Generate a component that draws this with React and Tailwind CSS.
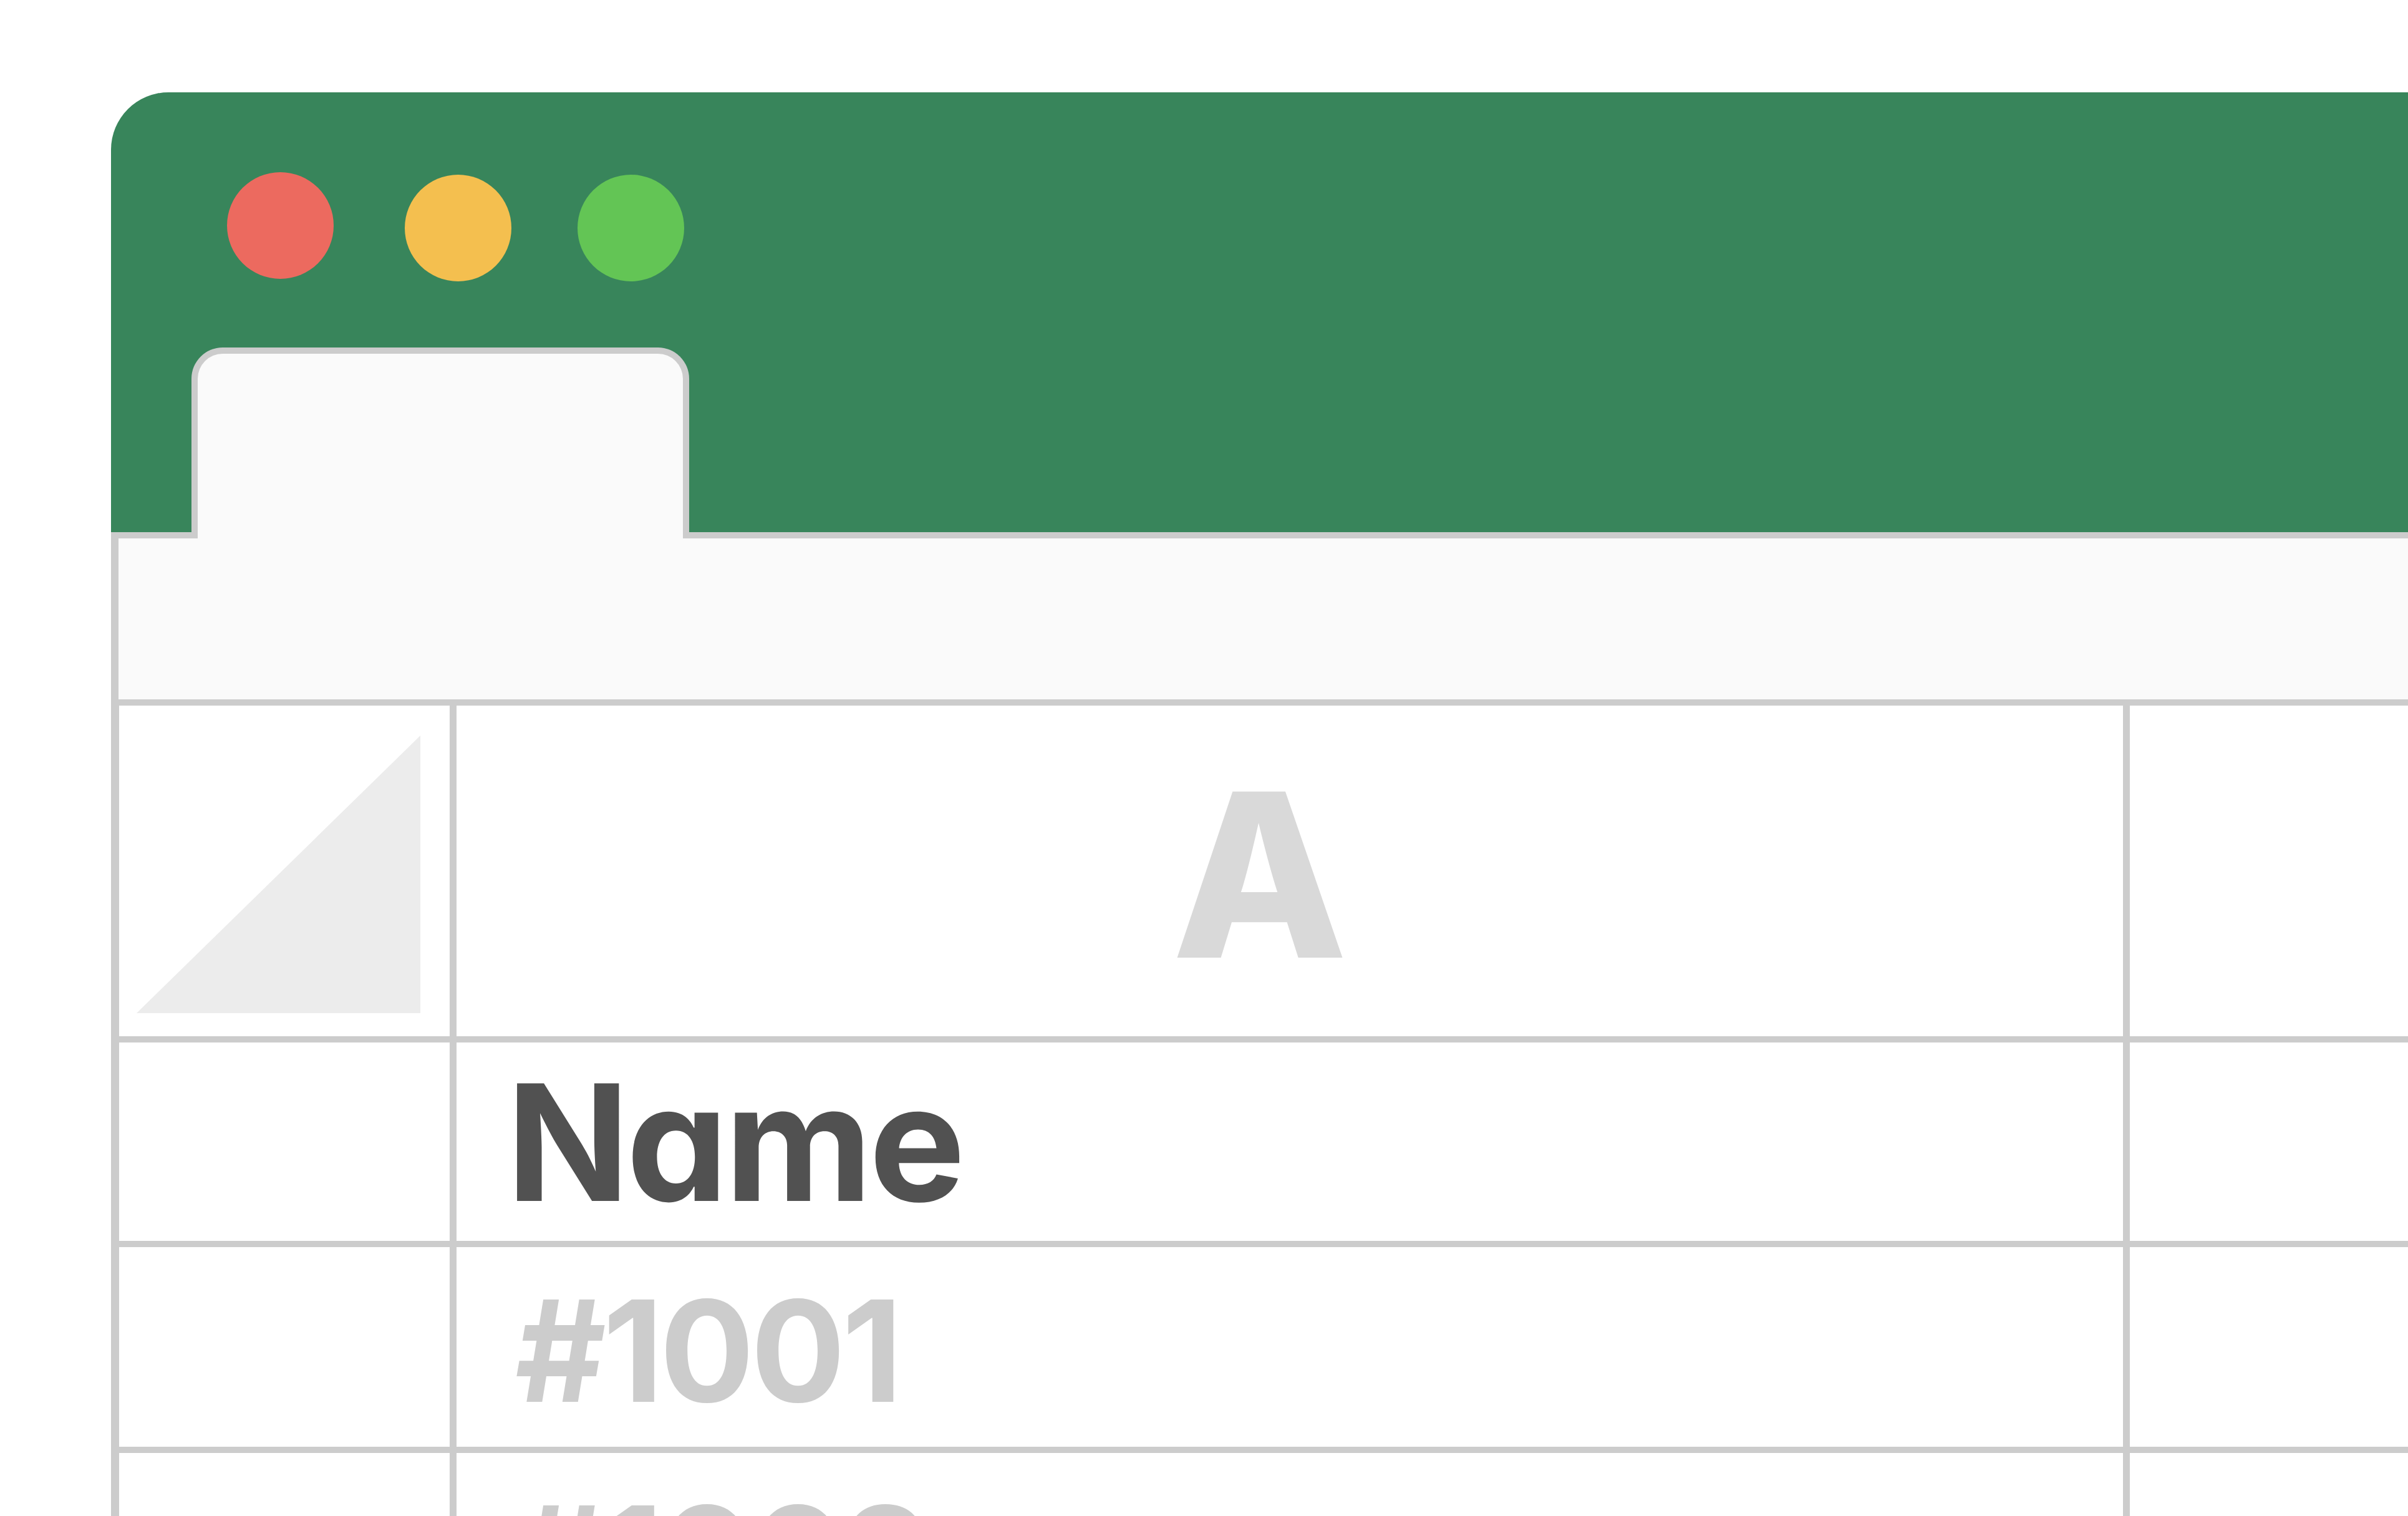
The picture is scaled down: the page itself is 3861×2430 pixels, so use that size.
import React from 'react';

const rows = [
  { text: 'Name', className: 'text-[#515151] text-[259px] pl-[80px] tracking-[-0.02em]' },
  { text: '#1001', className: 'text-[#cccccc] text-[225px] pl-[94px] pt-[12px] tracking-[-0.025em]' },
  { text: '#1002', className: 'text-[#cccccc] text-[225px] pl-[94px] pt-[12px] tracking-[-0.025em]' },
];

export default function App() {
  return (
    <div className="w-[3861px] h-[2430px] overflow-hidden bg-white pl-[178px] pt-[148px] font-['Inter',sans-serif] [font-feature-settings:'cv11']">
      <div className="w-[3683px]">
        {/* Title bar */}
        <div className="bg-[#38855b] rounded-tl-[92px] flex flex-col">
          <div className="flex items-start pt-[128px] pl-[186px]">
            <div className="w-[171px] h-[171px] rounded-full bg-[#ec6a5f]" />
            <div className="w-[171px] h-[171px] rounded-full bg-[#f4bf4f] ml-[114px] mt-[4px]" />
            <div className="w-[171px] h-[171px] rounded-full bg-[#63c555] ml-[106px] mt-[4px]" />
          </div>
          <div className="flex items-end mt-[106px] h-[306px]">
            <div className="w-[129px] border-b-[10px] border-[#cccccc]" />
            <div className="w-[798px] h-full bg-[#fafafa] border-t-[10px] border-x-[10px] border-[#cccccc] rounded-t-[50px]" />
            <div className="flex-1 border-b-[10px] border-[#cccccc]" />
          </div>
        </div>

        {/* Toolbar */}
        <div className="h-[268px] bg-[#fafafa] border-l-[12px] border-b-[10px] border-[#cccccc]" />

        {/* Sheet grid */}
        <div className="grid grid-cols-[530px_2672px_1fr] grid-rows-[530px_318px_320px_320px] gap-x-[11px] gap-y-[10px] bg-[#cccccc] pl-[13px]">
          <div className="bg-white pl-[28px] pt-[48px]">
            <svg width="455" height="445" viewBox="0 0 455 445">
              <polygon points="0,445 455,0 455,445" fill="#ececec" />
            </svg>
          </div>
          <div className="bg-white flex items-center justify-center pr-[96px] pt-[12px]">
            <span className="text-[366px] leading-none font-extrabold text-[#d9d9d9]">A</span>
          </div>
          <div className="bg-white" />

          {rows.map((row) => (
            <React.Fragment key={row.text}>
              <div className="bg-white" />
              <div className={`bg-white flex items-center ${row.className}`}>
                <span className="leading-none font-bold">{row.text}</span>
              </div>
              <div className="bg-white" />
            </React.Fragment>
          ))}
        </div>
      </div>
    </div>
  );
}
